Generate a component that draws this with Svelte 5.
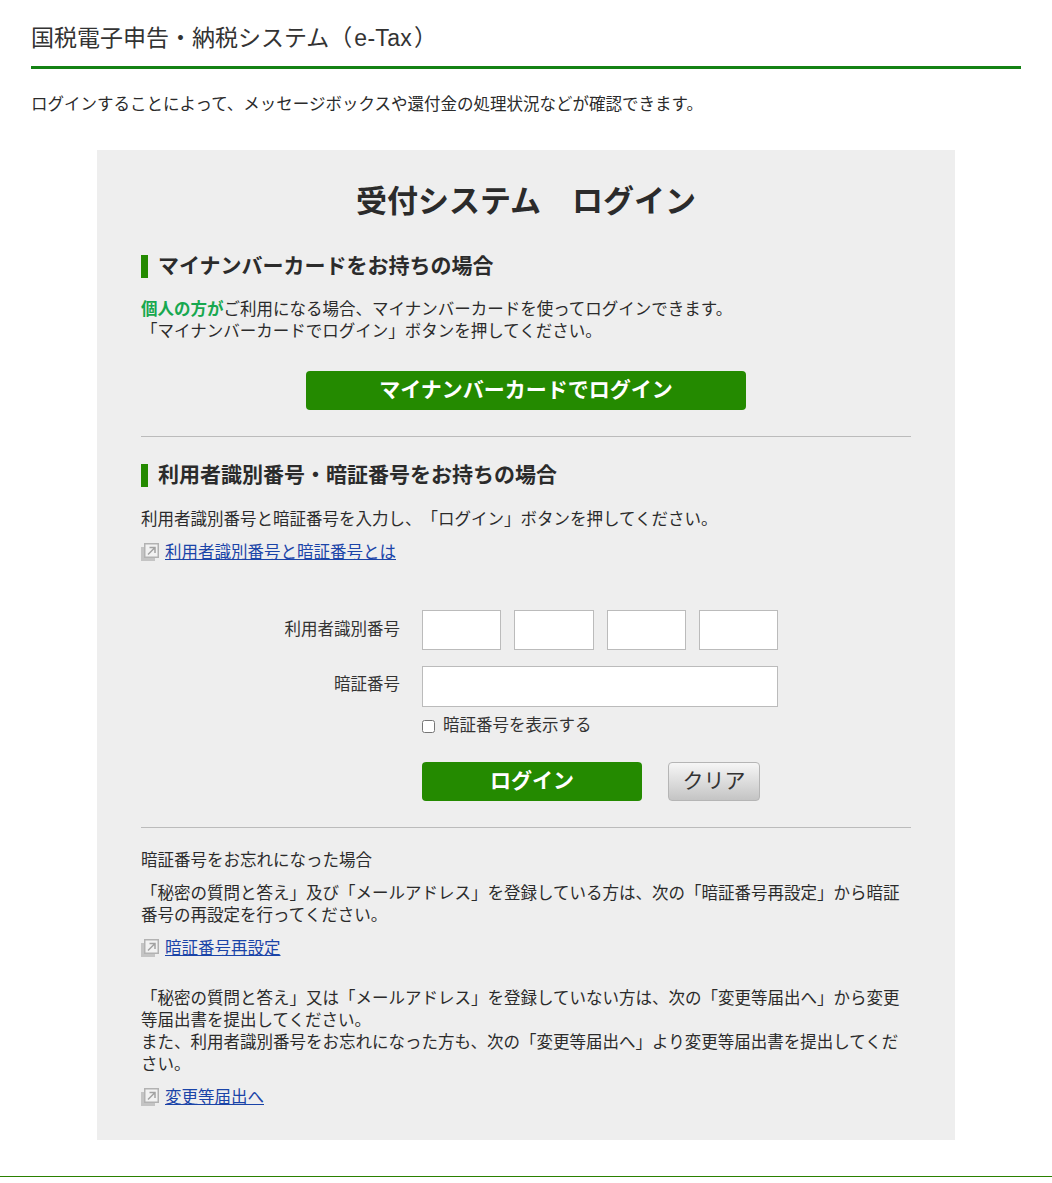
<script lang="ts">
	let id = $state(['', '', '', '']);
	let pin = $state('');
	let showPin = $state(false);
</script>

{#snippet linkIcon()}
	<svg class="link-icon" width="18" height="18" viewBox="0 0 18 18" aria-hidden="true">
		<rect x="0" y="4" width="14" height="14" fill="#c4c4c4" />
		<rect x="3.75" y="0.75" width="13.5" height="13.5" fill="#f2f2f2" stroke="#b2b2b2" stroke-width="1.5" />
		<path d="M7 11.5l6.5-6.5M8.5 4.5H14V10" fill="none" stroke="#a2a2a2" stroke-width="1.5" />
	</svg>
{/snippet}

<div class="page">
	<header class="site-head">
		<p class="site-title">国税電子申告・納税システム（<span class="site-abbr">e-Tax</span>）</p>
	</header>
	<p class="lead">ログインすることによって、メッセージボックスや還付金の処理状況などが確認できます。</p>

	<main class="panel">
		<h1>受付システム　ログイン</h1>

		<h2 class="first">マイナンバーカードをお持ちの場合</h2>
		<p class="card-note">
			<strong>個人の方が</strong>ご利用になる場合、マイナンバーカードを使ってログインできます。<br />
			「マイナンバーカードでログイン」ボタンを押してください。
		</p>
		<div class="card-action">
			<button type="button" class="btn-primary btn-card">マイナンバーカードでログイン</button>
		</div>

		<hr />

		<h2>利用者識別番号・暗証番号をお持ちの場合</h2>
		<p class="id-note">利用者識別番号と暗証番号を入力し、「ログイン」ボタンを押してください。</p>
		<p class="link-row">{@render linkIcon()}<a href="#id">利用者識別番号と暗証番号とは</a></p>

		<form class="login-form" onsubmit={(e) => e.preventDefault()}>
			<label class="field-label" for="id1">利用者識別番号</label>
			<div class="id-inputs">
				{#each id as _, i}
					<input id="id{i + 1}" type="text" maxlength="4" bind:value={id[i]} />
				{/each}
			</div>

			<label class="field-label pin-label" for="pin">暗証番号</label>
			<div class="pin-field">
				<input id="pin" type={showPin ? 'text' : 'password'} bind:value={pin} />
				<label class="show-pin">
					<input type="checkbox" bind:checked={showPin} />
					<span>暗証番号を表示する</span>
				</label>
			</div>

			<div class="actions">
				<button type="submit" class="btn-primary btn-login">ログイン</button>
				<button type="reset" class="btn-clear">クリア</button>
			</div>
		</form>

		<hr />

		<p class="forgot-title">暗証番号をお忘れになった場合</p>
		<p class="forgot-text">「秘密の質問と答え」及び「メールアドレス」を登録している方は、次の「暗証番号再設定」から暗証番号の再設定を行ってください。</p>
		<p class="link-row">{@render linkIcon()}<a href="#pin">暗証番号再設定</a></p>

		<p class="forgot-text second">
			「秘密の質問と答え」又は「メールアドレス」を登録していない方は、次の「変更等届出へ」から変更等届出書を提出してください。<br />
			また、利用者識別番号をお忘れになった方も、次の「変更等届出へ」より変更等届出書を提出してください。
		</p>
		<p class="link-row">{@render linkIcon()}<a href="#change">変更等届出へ</a></p>
	</main>

	<footer class="site-foot"></footer>
</div>

<style>
	:global(body) {
		background: #fff;
		color: #2b2b2b;
		font-family: "Noto Sans CJK JP", "Noto Sans", sans-serif;
		font-size: 16.5px;
		text-spacing-trim: space-all;
	}

	.page {
		height: 1183px;
		overflow: hidden;
	}

	p {
		margin: 0;
	}

	.site-head {
		margin: 0 31px;
		height: 69px;
		box-sizing: border-box;
		border-bottom: 3px solid #148214;
	}

	.site-title {
		padding-top: 21px;
		font-family: "Liberation Sans", "Noto Sans CJK JP", sans-serif;
		font-size: 23px;
		line-height: 34px;
		color: #333;
	}

	.site-abbr {
		letter-spacing: 0.3px;
		padding: 0 2px;
	}

	.lead {
		margin: 22px 31px 0;
		line-height: 24px;
	}

	.panel {
		margin: 35px 97px 0;
		padding: 26px 44px 0;
		height: 990px;
		box-sizing: border-box;
		background: #eee;
	}

	h1 {
		margin: 0;
		text-align: center;
		font-size: 31px;
		line-height: 46px;
		font-weight: 700;
	}

	h2 {
		margin: 0;
		padding: 0 0 4px 10px;
		border-left: 7px solid #248a00;
		font-size: 21px;
		line-height: 19px;
		font-weight: 700;
	}

	h2.first {
		margin-top: 33px;
	}

	hr {
		margin: 0;
		border: 0;
		border-top: 1px solid #bbb;
	}

	.card-note {
		margin-top: 19px;
		line-height: 22px;
	}

	.card-note strong {
		color: #17a84f;
		font-weight: 700;
	}

	.card-action {
		display: flex;
		justify-content: center;
		margin: 30px 0 26px;
	}

	.btn-primary {
		box-sizing: border-box;
		height: 39px;
		padding: 0 0 6px;
		border: 0;
		border-radius: 4px;
		background: #248a00;
		color: #fff;
		font: 700 21px/30px "Noto Sans CJK JP", sans-serif;
	}

	.btn-card {
		width: 440px;
	}

	hr + h2 {
		margin-top: 27px;
	}

	.id-note {
		margin-top: 19px;
		line-height: 24px;
	}

	.link-row {
		display: flex;
		align-items: center;
		gap: 6px;
		line-height: 24px;
		margin-top: 9px;
	}

	.link-row a {
		color: #1a44a8;
	}

	.link-icon {
		flex: none;
		margin-top: 2px;
	}

	.forgot-text + .link-row {
		margin-top: 10px;
	}

	.login-form {
		display: grid;
		grid-template-columns: 259px 356px;
		column-gap: 22px;
		margin-top: 47px;
	}

	.field-label {
		text-align: right;
		line-height: 36px;
		color: #333;
	}

	.pin-label {
		margin-top: 16px;
		line-height: 34px;
	}

	input[type="text"],
	input[type="password"] {
		box-sizing: border-box;
		height: 40px;
		border: 1px solid #bbb;
		background: #fff;
		padding: 0 6px;
		font-size: 16px;
		outline: none;
	}

	.id-inputs {
		display: flex;
		gap: 13px;
	}

	.id-inputs input {
		flex: 1;
		min-width: 0;
	}

	.pin-field {
		margin-top: 16px;
	}

	.pin-field input[type="text"],
	.pin-field input[type="password"] {
		display: block;
		width: 100%;
		height: 41px;
	}

	.show-pin {
		display: flex;
		align-items: center;
		gap: 8px;
		margin-top: 7px;
		line-height: 24px;
		color: #333;
	}

	.show-pin span {
		line-height: 20px;
		padding-bottom: 4px;
	}

	.show-pin input {
		width: 13px;
		height: 13px;
		margin: 0;
	}

	.actions {
		grid-column: 2;
		display: flex;
		gap: 26px;
		margin-top: 24px;
		margin-bottom: 26px;
	}

	.btn-login {
		width: 220px;
	}

	.btn-clear {
		box-sizing: border-box;
		width: 92px;
		height: 39px;
		padding: 0 0 6px;
		border: 1px solid #b5b5b5;
		border-radius: 4px;
		background: linear-gradient(#f6f6f6, #c4c4c4);
		color: #333;
		font: 400 21px/30px "Noto Sans CJK JP", sans-serif;
	}

	.forgot-title {
		margin-top: 19px;
		line-height: 24px;
	}

	.forgot-text {
		margin-top: 10px;
		line-height: 22px;
	}

	.forgot-text.second {
		margin-top: 27px;
	}

	.site-foot {
		margin-top: 36px;
		border-top: 1px solid #2a8000;
	}
</style>
